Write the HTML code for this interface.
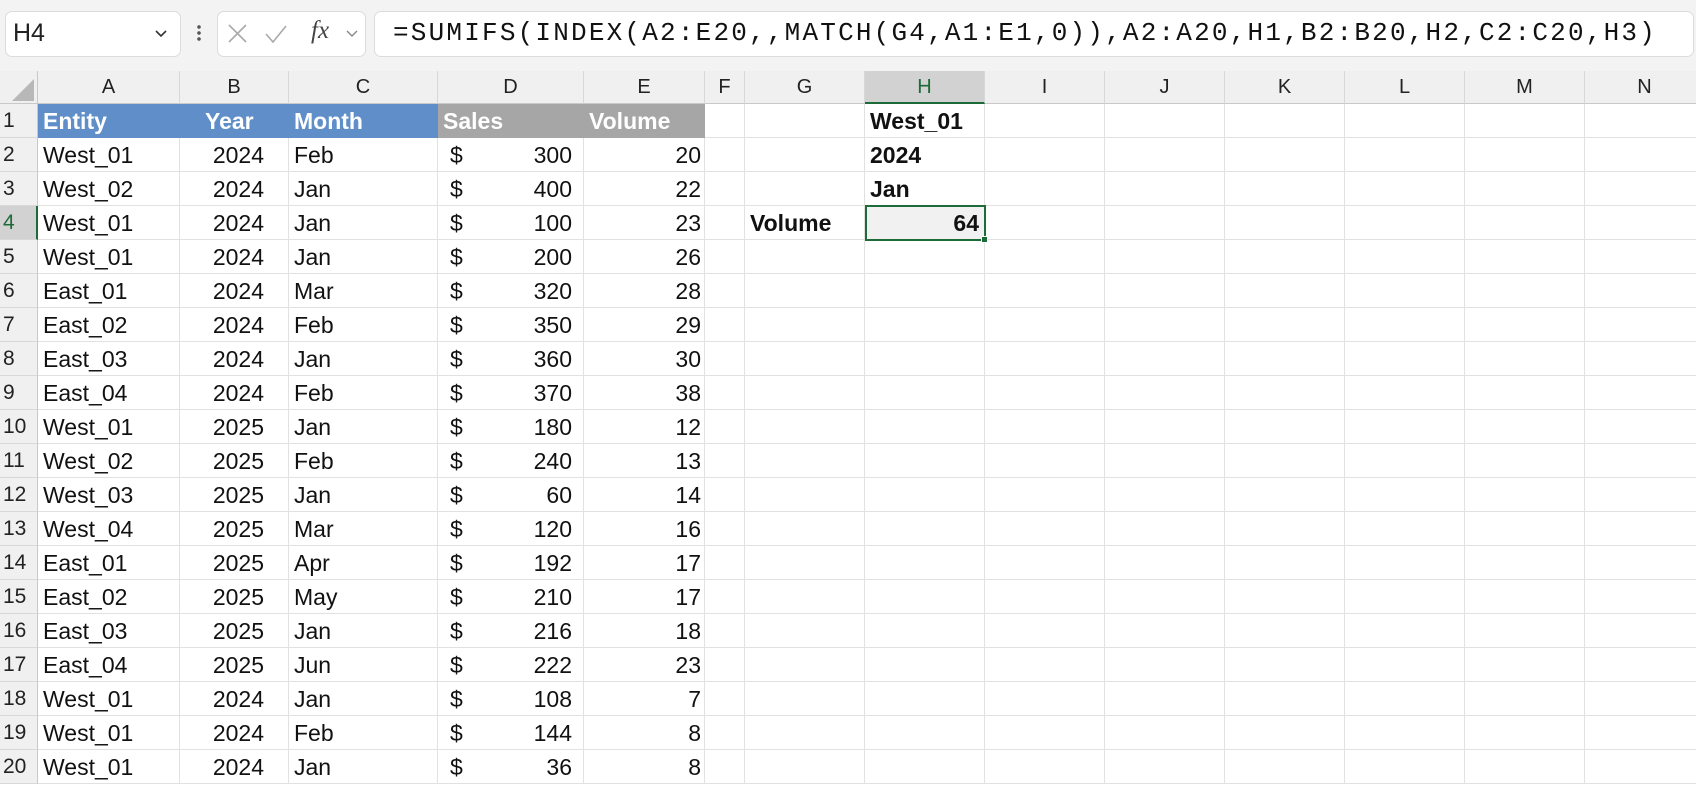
<!DOCTYPE html>
<html><head><meta charset="utf-8"><style>
*{margin:0;padding:0;box-sizing:border-box}
body{width:1696px;height:792px;background:#fff;font-family:"Liberation Sans",Arial,sans-serif;overflow:hidden;position:relative}
.top{position:absolute;left:0;top:0;width:1696px;height:71px;background:#f3f3f3}
.box{position:absolute;background:#fff;border:1px solid #dcdcdc;border-radius:7px}
.hdr{position:absolute;top:71px;height:33px;background:#f0f0f0;border-bottom:1px solid #c8c8c8;font-size:20px;color:#222;text-align:center;line-height:33px}
.c{position:absolute;height:34px;border-right:1px solid #e1e1e1;border-bottom:1px solid #e1e1e1;font-size:23px;line-height:34px;padding:0 5px;white-space:nowrap;color:#111}
.rh{position:absolute;left:0;width:38px;height:34px;background:#f0f0f0;border-right:1px solid #c8c8c8;border-bottom:1px solid #d8d8d8;font-size:21px;line-height:34px;padding-left:3px;color:#222}
.r{text-align:right}
</style></head><body>
<div class="top"></div>
<div class="box" style="left:5px;top:11px;width:176px;height:46px"></div>
<div style="position:absolute;left:13px;top:19px;font-size:25px;color:#222">H4</div>
<svg style="position:absolute;left:154px;top:29px" width="14" height="10"><path d="M2 2 L7 7 L12 2" stroke="#333" stroke-width="1.6" fill="none"/></svg>
<div style="position:absolute;left:197px;top:24px;width:4px;height:18px;background:radial-gradient(circle,#555 1.6px,transparent 2px) 0 0/4px 6px"></div>
<div class="box" style="left:217px;top:11px;width:149px;height:46px"></div>
<svg style="position:absolute;left:226px;top:22px" width="110" height="26">
<path d="M3 3 L20 20 M20 3 L3 20" stroke="#aaa" stroke-width="1.6"/>
<path d="M40 12 L47 20 L60 4" stroke="#aaa" stroke-width="1.6" fill="none"/></svg>
<div style="position:absolute;left:311px;top:17px;font-family:'Liberation Serif',serif;font-style:italic;font-size:25px;color:#444">fx</div>
<svg style="position:absolute;left:345px;top:29px" width="14" height="10"><path d="M2 2 L7 7 L12 2" stroke="#888" stroke-width="1.4" fill="none"/></svg>
<div class="box" style="left:374px;top:11px;width:1320px;height:46px"></div>
<div style="position:absolute;left:393px;top:18px;font-family:'Liberation Mono',monospace;font-size:26px;color:#111;letter-spacing:2.2px;white-space:nowrap">=SUMIFS(INDEX(A2:E20,,MATCH(G4,A1:E1,0)),A2:A20,H1,B2:B20,H2,C2:C20,H3)</div>
<div class="hdr" style="left:0;width:38px;border-right:1px solid #c8c8c8"><svg width="38" height="33"><path d="M34 8 L34 30 L12 30 Z" fill="#b8b8b8"/></svg></div>
<div id="g"></div>
<script>
var cols=[["A",38,180],["B",180,289],["C",289,438],["D",438,584],["E",584,705],["F",705,745],["G",745,865],["H",865,985],["I",985,1105],["J",1105,1225],["K",1225,1345],["L",1345,1465],["M",1465,1585],["N",1585,1705]];
var h="";
cols.forEach(function(c){var hl=c[0]=="H";h+='<div class="hdr" style="left:'+c[1]+'px;width:'+(c[2]-c[1])+'px;border-right:1px solid #d8d8d8;'+(hl?'background:#d2d2d2;color:#1e6b3a;border-bottom:2px solid #1e6b3a':'')+'">'+c[0]+'</div>';});
var d=[["West_01",2024,"Feb",300,20],["West_02",2024,"Jan",400,22],["West_01",2024,"Jan",100,23],["West_01",2024,"Jan",200,26],["East_01",2024,"Mar",320,28],["East_02",2024,"Feb",350,29],["East_03",2024,"Jan",360,30],["East_04",2024,"Feb",370,38],["West_01",2025,"Jan",180,12],["West_02",2025,"Feb",240,13],["West_03",2025,"Jan",60,14],["West_04",2025,"Mar",120,16],["East_01",2025,"Apr",192,17],["East_02",2025,"May",210,17],["East_03",2025,"Jan",216,18],["East_04",2025,"Jun",222,23],["West_01",2024,"Jan",108,7],["West_01",2024,"Feb",144,8],["West_01",2024,"Jan",36,8]];
for(var i=0;i<20;i++){var y=104+i*34;
h+='<div class="rh" style="top:'+y+'px;'+(i==3?'background:#d2d2d2;color:#1e6b3a;border-right:2px solid #1e6b3a':'')+'">'+(i+1)+'</div>';
cols.forEach(function(c){h+='<div class="c" style="left:'+c[1]+'px;top:'+y+'px;width:'+(c[2]-c[1])+'px"></div>';});
}
function t(x,y,w,s,cl,st){h+='<div class="c '+(cl||'')+'" style="left:'+x+'px;top:'+y+'px;width:'+w+'px;border:none;'+(st||'')+'">'+s+'</div>';}
var y=104;
h+='<div style="position:absolute;left:38px;top:104px;width:400px;height:34px;background:#5f8ec8"></div><div style="position:absolute;left:438px;top:104px;width:267px;height:34px;background:#a6a6a6"></div>';
var ws='color:#fff;font-weight:bold;';
t(38,y,142,"Entity","",ws);t(200,y,89,"Year","",ws);t(289,y,149,"Month","",ws);t(438,y,146,"Sales","",ws);t(584,y,121,"Volume","",ws);
d.forEach(function(r,i){var yy=104+(i+1)*34;t(38,yy,142,r[0]);t(180,yy,109,r[1],"r","padding-right:25px");t(289,yy,149,r[2]);t(438,yy,146,"$","","padding-left:12px");t(438,yy,146,r[3],"r","padding-right:12px");t(584,yy,121,r[4],"r","padding-right:4px");});
var b='font-weight:bold;';
t(865,104,120,"West_01","",b);t(865,138,120,"2024","",b);t(865,172,120,"Jan","",b);t(745,206,120,"Volume","",b);
h+='<div style="position:absolute;left:865px;top:205px;width:121px;height:36px;border:2px solid #1e6b3a;background:#f1f1f1"></div><div style="position:absolute;left:981px;top:236px;width:7px;height:7px;background:#1e6b3a;border:1px solid #fff"></div>';
t(865,206,120,"64","r",b+"padding-right:6px");
document.getElementById("g").innerHTML=h;
</script>
</body></html>
